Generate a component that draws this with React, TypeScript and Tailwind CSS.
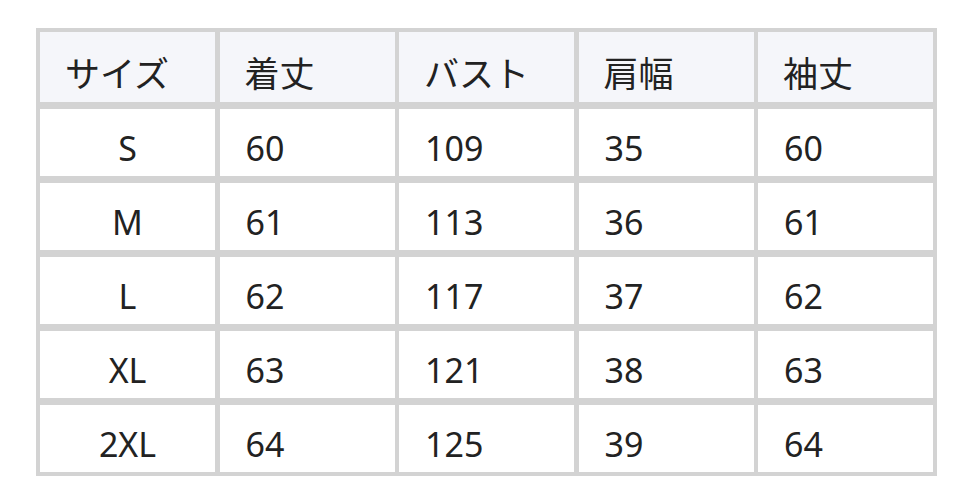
import React from 'react';

const headers = ['サイズ', '着丈', 'バスト', '肩幅', '袖丈'];

const rows: string[][] = [
  ['S', '60', '109', '35', '60'],
  ['M', '61', '113', '36', '61'],
  ['L', '62', '117', '37', '62'],
  ['XL', '63', '121', '38', '63'],
  ['2XL', '64', '125', '39', '64'],
];

const App: React.FC = () => {
  return (
    <div
      className="w-[972px] h-[503px] bg-white pt-[28px] pl-[36px] text-[#222222]"
      style={{ fontFamily: '"Noto Sans", "Noto Sans CJK JP", sans-serif' }}
    >
      <div className="w-[901px] bg-[#d3d3d3] p-[4px] flex flex-col gap-[6.6px]">
        {/* Header */}
        <div className="grid grid-cols-5 gap-x-[4.5px]">
          {headers.map((h) => (
            <div
              key={h}
              className="h-[70px] bg-[#f5f6fa] flex items-center pl-[25px] pt-[12px] text-[35px] leading-none"
            >
              {h}
            </div>
          ))}
        </div>

        {/* Body */}
        {rows.map((row) => (
          <div key={row[0]} className="grid grid-cols-5 gap-x-[4.5px]">
            {row.map((cell, i) => (
              <div
                key={i}
                className={
                  i === 0
                    ? 'h-[67.4px] bg-white flex items-center justify-center pt-[12px] text-[34px] leading-none'
                    : 'h-[67.4px] bg-white flex items-center pl-[26px] pt-[12px] text-[34px] leading-none'
                }
              >
                {cell}
              </div>
            ))}
          </div>
        ))}
      </div>
    </div>
  );
};

export default App;
